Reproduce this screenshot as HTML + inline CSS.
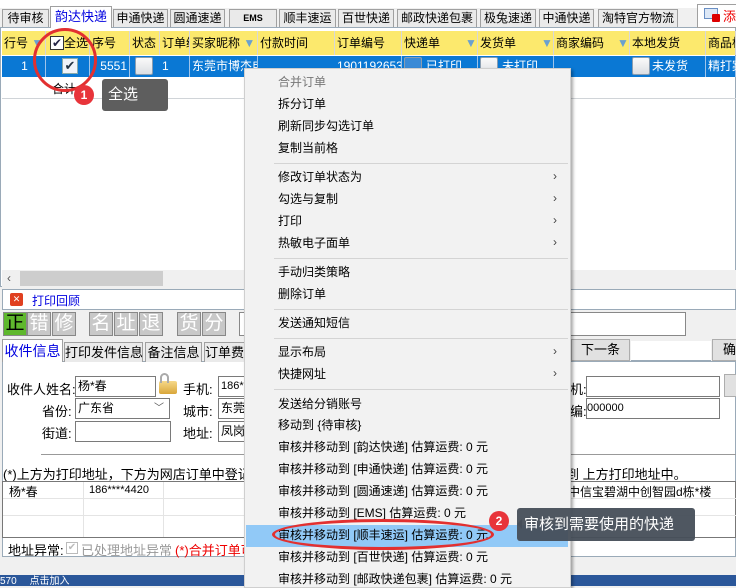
<!DOCTYPE html>
<html><head><meta charset="utf-8"><style>
*{margin:0;padding:0;box-sizing:border-box}
body{width:736px;height:586px;overflow:hidden;position:relative;background:#f0f0f0;font-family:"Liberation Sans","Noto Sans CJK SC",sans-serif;font-size:12px;color:#000}
.a{position:absolute;white-space:nowrap}
.tab{position:absolute;top:9px;height:18px;border:1px solid #a0a0a0;border-bottom:none;background:#eaeaea;text-align:center;line-height:17px;font-size:12px;white-space:nowrap}
.hd{position:absolute;top:31px;height:24px;background:#fce96d;border-right:1px solid #d8d8d8;line-height:24px;padding-left:2px;font-size:12px;white-space:nowrap}
.rw{position:absolute;top:56px;height:21px;line-height:21px;color:#fff;border-right:1px solid #9fc4ea;padding-left:2px;white-space:nowrap}
.cb{position:absolute;width:18px;height:18px;border:1px solid #8a9db0;background:linear-gradient(#fafafa,#dcdfe3);border-radius:2px}
.mi{position:absolute;left:278px;font-size:12px;line-height:16px;white-space:nowrap}
.sep{position:absolute;left:274px;width:294px;height:1px;background:#d4d4d4}
.arr{position:absolute;left:553px;font-size:12px;color:#444}
.inp{position:absolute;background:#fff;border:1px solid #7a7a7a;height:21px;line-height:19px;padding-left:2px;white-space:nowrap;overflow:hidden}
.btn{position:absolute;top:312px;width:24px;height:24px;background:#c8c8c8;border:1px solid #888;color:#fff;font-size:19px;line-height:22px;text-align:center}
.t2{position:absolute;top:342px;height:20px;border:1px solid #a0a0a0;border-bottom:none;background:#eaeaea;line-height:19px;text-align:center;font-size:13px;white-space:nowrap;overflow:hidden}
</style></head><body>
<div class="a" style="left:0;top:0;width:736px;height:8px;background:#fff"></div>
<div class="a" style="left:0;top:27px;width:736px;height:260px;background:#fff;border:1px solid #9aaab8"></div>
<div class="tab" style="left:2px;width:47px">待审核</div>
<div class="tab" style="left:50px;width:62px;top:6px;height:22px;background:#fff;color:#0000e0;font-size:13px;line-height:20px">韵达快递</div>
<div class="tab" style="left:113px;width:55px">申通快递</div>
<div class="tab" style="left:170px;width:55px">圆通速递</div>
<div class="tab" style="left:229px;width:48px;font-size:9px;font-weight:bold">EMS</div>
<div class="tab" style="left:279px;width:57px">顺丰速运</div>
<div class="tab" style="left:338px;width:56px">百世快递</div>
<div class="tab" style="left:397px;width:80px">邮政快递包裹</div>
<div class="tab" style="left:480px;width:56px">极兔速递</div>
<div class="tab" style="left:539px;width:55px">中通快递</div>
<div class="tab" style="left:598px;width:80px">淘特官方物流</div>
<div class="a" style="left:697px;top:4px;width:39px;height:24px;background:#fff;border:1px solid #a0a0a0;border-right:none"></div>
<div class="a" style="left:704px;top:8px;width:14px;height:11px;border:1px solid #6a8fc4;background:#dde8f6"></div>
<div class="a" style="left:712px;top:14px;width:8px;height:8px;background:#d00;border-radius:1px"></div>
<div class="a" style="left:723px;top:6px;color:#e00;font-size:13px">添</div>
<div class="hd" style="left:2px;width:44px">行号 <span style="color:#6aa0d0">▼</span></div>
<div class="hd" style="left:46px;width:44px;padding-left:18px">全选</div>
<div class="a" style="left:50px;top:36px;width:14px;height:14px;border:1px solid #333;background:#fff;font-size:12px;line-height:12px;text-align:center;color:#224">✔</div>
<div class="hd" style="left:90px;width:40px">序号</div>
<div class="hd" style="left:130px;width:30px">状态</div>
<div class="hd" style="left:160px;width:30px;overflow:hidden">订单编</div>
<div class="hd" style="left:190px;width:68px">买家昵称 <span style="color:#6aa0d0">▼</span></div>
<div class="hd" style="left:258px;width:77px">付款时间</div>
<div class="hd" style="left:335px;width:67px">订单编号</div>
<div class="hd" style="left:402px;width:76px">快递单 <span style="position:absolute;left:63px;color:#6aa0d0">▼</span></div>
<div class="hd" style="left:478px;width:76px">发货单 <span style="position:absolute;left:63px;color:#6aa0d0">▼</span></div>
<div class="hd" style="left:554px;width:76px">商家编码 <span style="position:absolute;left:63px;color:#6aa0d0">▼</span></div>
<div class="hd" style="left:630px;width:76px">本地发货</div>
<div class="hd" style="left:706px;width:30px;overflow:hidden">商品标</div>
<div class="a" style="left:2px;top:56px;width:734px;height:21px;background:#0a78d4"></div>
<div class="rw" style="left:2px;width:44px;text-align:center">1</div>
<div class="rw" style="left:46px;width:44px"></div>
<div class="a" style="left:62px;top:58px;width:16px;height:16px;background:#eef3f9;border:1px solid #8aa;font-size:13px;line-height:14px;text-align:center;color:#234">✔</div>
<div class="rw" style="left:90px;width:40px;text-align:right;padding-right:2px">5551</div>
<div class="cb" style="left:135px;top:57px"></div>
<div class="rw" style="left:160px;width:30px">1</div>
<div class="rw" style="left:190px;width:68px;overflow:hidden">东莞市博杰电</div>
<div class="rw" style="left:335px;width:67px;overflow:hidden">190119265368</div>
<div class="cb" style="left:404px;top:57px;background:#3a8ad6"></div>
<div class="rw" style="left:402px;width:76px;padding-left:24px">已打印</div>
<div class="cb" style="left:480px;top:57px"></div>
<div class="rw" style="left:478px;width:76px;padding-left:24px">未打印</div>
<div class="cb" style="left:632px;top:57px"></div>
<div class="rw" style="left:630px;width:76px;padding-left:22px">未发货</div>
<div class="rw" style="left:706px;width:30px">精打案</div>
<div class="a" style="left:2px;top:98px;width:734px;height:1px;background:#d0d4d8"></div>
<div class="a" style="left:52px;top:80px">合计</div>
<div class="a" style="left:2px;top:270px;width:734px;height:17px;background:#f0f0f0"></div>
<div class="a" style="left:20px;top:271px;width:143px;height:15px;background:#cdcdcd"></div>
<div class="a" style="left:7px;top:271px;font-size:12px;color:#555">&lsaquo;</div>
<div class="a" style="left:2px;top:289px;width:734px;height:21px;background:#fff;border:1px solid #9aaab8"></div>
<div class="a" style="left:10px;top:293px;width:13px;height:13px;background:#e04020;border-radius:2px;color:#fff;font-size:9px;line-height:13px;text-align:center">✕</div>
<div class="a" style="left:32px;top:292px;color:#0000e0">打印回顾</div>
<div class="btn" style="left:3px;background:#5fb82d;color:#000">正</div>
<div class="btn" style="left:27px">错</div>
<div class="btn" style="left:52px">修</div>
<div class="btn" style="left:89px">名</div>
<div class="btn" style="left:114px">址</div>
<div class="btn" style="left:139px">退</div>
<div class="btn" style="left:177px">货</div>
<div class="btn" style="left:202px">分</div>
<div class="a" style="left:239px;top:312px;width:10px;height:24px;background:#fff;border:1px solid #888"></div>
<div class="a" style="left:570px;top:312px;width:116px;height:24px;background:#fff;border:1px solid #888"></div>
<div class="a" style="left:2px;top:361px;width:734px;height:196px;background:#fff;border:1px solid #9aaab8"></div>
<div class="t2" style="left:2px;width:61px;top:339px;height:23px;background:#fff;color:#0000e0;font-size:14px;line-height:22px">收件信息</div>
<div class="t2" style="left:64px;width:79px">打印发件信息</div>
<div class="t2" style="left:145px;width:57px">备注信息</div>
<div class="t2" style="left:204px;width:42px">订单费用</div>
<div class="a" style="left:571px;top:339px;width:59px;height:22px;background:#e1e1e1;border:1px solid #adadad;text-align:center;line-height:20px;font-size:13px">下一条</div>
<div class="a" style="left:631px;top:341px;width:80px;height:20px;background:#fff;border-bottom:1px solid #9aaab8"></div>
<div class="a" style="left:712px;top:339px;width:30px;height:22px;background:#e1e1e1;border:1px solid #adadad;padding-left:10px;line-height:20px;font-size:13px">确</div>
<div class="a" style="left:7px;top:379px;font-size:13px">收件人姓名:</div>
<div class="inp" style="left:75px;top:376px;width:81px">杨*春</div>
<div class="a" style="left:159px;top:381px;width:18px;height:13px;background:linear-gradient(#f6d98a,#d9a63a);border-radius:2px"></div>
<div class="a" style="left:160px;top:373px;width:9px;height:10px;border:2px solid #aaa;border-bottom:none;border-radius:5px 5px 0 0"></div>
<div class="a" style="left:42px;top:401px;font-size:13px">省份:</div>
<div class="inp" style="left:75px;top:398px;width:95px">广东省<span style="position:absolute;right:5px;color:#555;font-size:10px">﹀</span></div>
<div class="a" style="left:42px;top:423px;font-size:13px">街道:</div>
<div class="inp" style="left:75px;top:421px;width:96px"></div>
<div class="a" style="left:183px;top:379px;font-size:13px">手机:</div>
<div class="inp" style="left:218px;top:376px;width:40px;font-size:11px">186*</div>
<div class="a" style="left:183px;top:401px;font-size:13px">城市:</div>
<div class="inp" style="left:218px;top:398px;width:40px">东莞</div>
<div class="a" style="left:183px;top:423px;font-size:13px">地址:</div>
<div class="inp" style="left:218px;top:421px;width:40px">凤岗</div>
<div class="a" style="left:570px;top:379px;font-size:13px">机:</div>
<div class="inp" style="left:586px;top:376px;width:134px"></div>
<div class="a" style="left:724px;top:374px;width:14px;height:23px;background:#e1e1e1;border:1px solid #adadad"></div>
<div class="a" style="left:570px;top:401px;font-size:13px">编:</div>
<div class="inp" style="left:586px;top:398px;width:134px;font-size:11px;padding-left:0">000000</div>
<div class="a" style="left:41px;top:454px;width:695px;height:1px;background:#999"></div>
<div class="a" style="left:3px;top:464px;font-size:13px">(*)上方为打印地址，下方为网店订单中登记的</div>
<div class="a" style="left:566px;top:464px;font-size:13px">到 上方打印地址中。</div>
<div class="a" style="left:2px;top:481px;width:734px;height:57px;background:#fff;border:1px solid #777"></div>
<div class="a" style="left:3px;top:498px;width:733px;height:1px;background:#e4e4e4"></div>
<div class="a" style="left:3px;top:515px;width:733px;height:1px;background:#e4e4e4"></div>
<div class="a" style="left:83px;top:482px;width:1px;height:55px;background:#e4e4e4"></div>
<div class="a" style="left:163px;top:482px;width:1px;height:55px;background:#e4e4e4"></div>
<div class="a" style="left:9px;top:483px">杨*春</div>
<div class="a" style="left:89px;top:484px;font-size:11px">186****4420</div>
<div class="a" style="left:568px;top:483px;font-size:12px">中信宝碧湖中创智园d栋*楼</div>
<div class="a" style="left:8px;top:540px;font-size:13px">地址异常:</div>
<div class="a" style="left:66px;top:542px;width:12px;height:12px;border:1px solid #bbb;color:#bbb;font-size:10px;line-height:10px;text-align:center">✔</div>
<div class="a" style="left:81px;top:540px;font-size:13px;color:#999">已处理地址异常</div>
<div class="a" style="left:175px;top:540px;font-size:13px;color:#e00">(*)合并订单可</div>
<div class="a" style="left:0;top:575px;width:736px;height:11px;background:#2b579a"></div>
<div class="a" style="left:0;top:577px;color:#fff;font-size:10px;line-height:9px">570 　点击加入</div>
<div class="a" style="left:244px;top:68px;width:327px;height:520px;background:#f2f2f2;border:1px solid #cfcfcf;box-shadow:2px 2px 3px rgba(0,0,0,.35)"></div>
<div class="a" style="left:246px;top:525px;width:322px;height:22px;background:#91c9f7"></div>
<div class="mi" style="top:74px;color:#777">合并订单</div>
<div class="mi" style="top:96px">拆分订单</div>
<div class="mi" style="top:118px">刷新同步勾选订单</div>
<div class="mi" style="top:140px">复制当前格</div>
<div class="sep" style="top:163px"></div>
<div class="mi" style="top:169px">修改订单状态为</div><div class="arr" style="top:169px">&rsaquo;</div>
<div class="mi" style="top:191px">勾选与复制</div><div class="arr" style="top:191px">&rsaquo;</div>
<div class="mi" style="top:213px">打印</div><div class="arr" style="top:213px">&rsaquo;</div>
<div class="mi" style="top:235px">热敏电子面单</div><div class="arr" style="top:235px">&rsaquo;</div>
<div class="sep" style="top:258px"></div>
<div class="mi" style="top:264px">手动归类策略</div>
<div class="mi" style="top:286px">删除订单</div>
<div class="sep" style="top:309px"></div>
<div class="mi" style="top:315px">发送通知短信</div>
<div class="sep" style="top:338px"></div>
<div class="mi" style="top:344px">显示布局</div><div class="arr" style="top:344px">&rsaquo;</div>
<div class="mi" style="top:366px">快捷网址</div><div class="arr" style="top:366px">&rsaquo;</div>
<div class="sep" style="top:389px"></div>
<div class="mi" style="top:396px">发送给分销账号</div>
<div class="mi" style="top:417px">移动到 {待审核}</div>
<div class="mi" style="top:439px">审核并移动到 [韵达快递] 估算运费: 0 元</div>
<div class="mi" style="top:461px">审核并移动到 [申通快递] 估算运费: 0 元</div>
<div class="mi" style="top:483px">审核并移动到 [圆通速递] 估算运费: 0 元</div>
<div class="mi" style="top:505px">审核并移动到 [EMS] 估算运费: 0 元</div>
<div class="mi" style="top:527px">审核并移动到 [顺丰速运] 估算运费: 0 元</div>
<div class="mi" style="top:549px">审核并移动到 [百世快递] 估算运费: 0 元</div>
<div class="mi" style="top:571px">审核并移动到 [邮政快递包裹] 估算运费: 0 元</div>
<div class="a" style="left:33px;top:28px;width:64px;height:64px;border:3px solid #e23030;border-radius:50%"></div>
<div class="a" style="left:74px;top:85px;width:20px;height:20px;background:#e8343a;border-radius:50%;color:#fff;font-weight:bold;font-size:12px;line-height:20px;text-align:center">1</div>
<div class="a" style="left:97px;top:91px;width:0;height:0;border:5px solid transparent;border-right-color:#5e5e5e"></div>
<div class="a" style="left:102px;top:79px;width:66px;height:32px;background:#5e5e5e;border-radius:3px;color:#fff;font-size:15px;line-height:32px;padding-left:6px">全选</div>
<div class="a" style="left:272px;top:519px;width:222px;height:31px;border:3px solid #e23030;border-radius:50%"></div>
<div class="a" style="left:489px;top:511px;width:20px;height:20px;background:#e8343a;border-radius:50%;color:#fff;font-weight:bold;font-size:12px;line-height:20px;text-align:center">2</div>
<div class="a" style="left:512px;top:519px;width:0;height:0;border:5px solid transparent;border-right-color:#4e5560"></div>
<div class="a" style="left:517px;top:508px;width:178px;height:33px;background:rgba(70,78,88,.95);border-radius:3px;color:#fff;font-size:15px;line-height:33px;padding-left:7px">审核到需要使用的快递</div>
</body></html>
